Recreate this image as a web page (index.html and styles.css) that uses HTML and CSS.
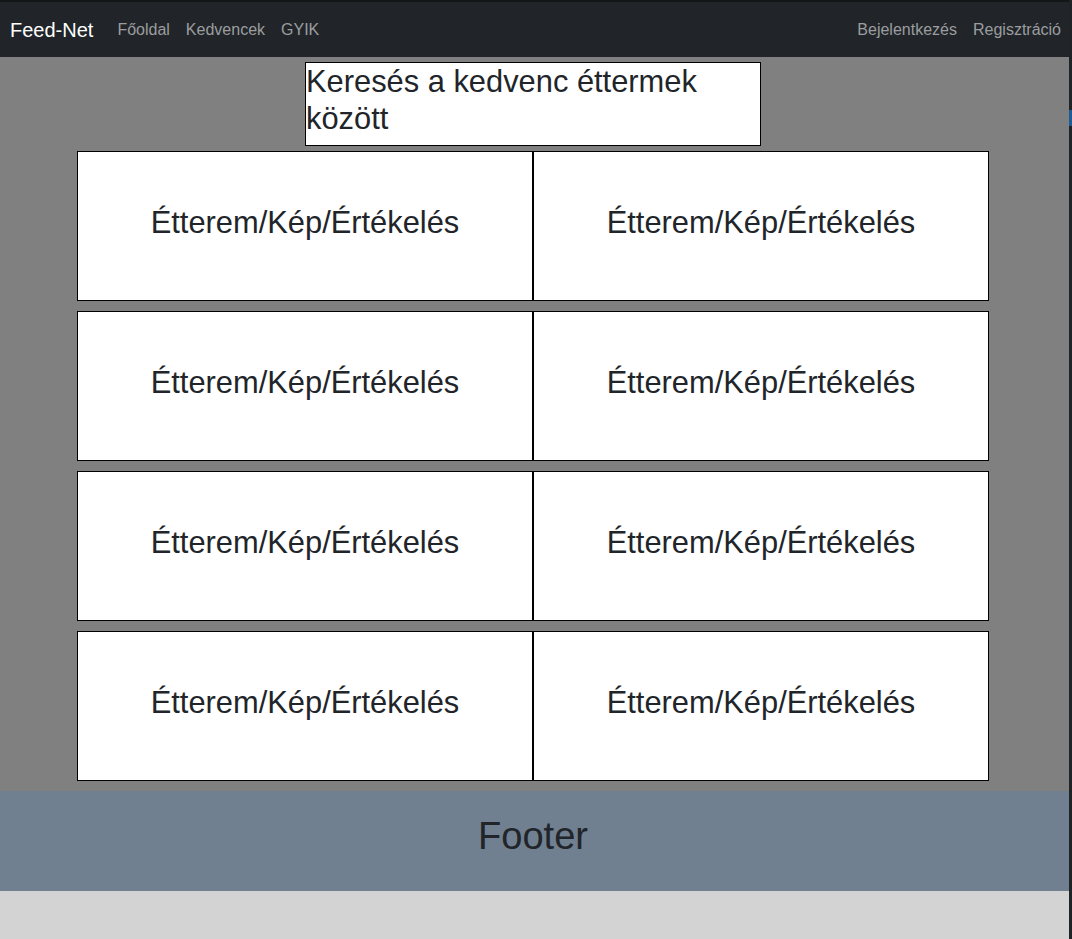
FILE: index.html
```html
<!DOCTYPE html>
<html lang="hu">
<head>
<meta charset="utf-8">
<title>Feed-Net</title>
<link rel="stylesheet" href="styles.css">
</head>
<body>
<div class="page">
  <nav class="navbar">
    <div class="nav-left">
      <a class="brand" href="#">Feed-Net</a>
      <a class="nav-link" href="#">Főoldal</a>
      <a class="nav-link" href="#">Kedvencek</a>
      <a class="nav-link" href="#">GYIK</a>
    </div>
    <div class="nav-right">
      <a class="nav-link" href="#">Bejelentkezés</a>
      <a class="nav-link" href="#">Regisztráció</a>
    </div>
  </nav>
  <main class="main">
    <div class="search">
      <h2 class="h2">Keresés a kedvenc éttermek között</h2>
    </div>
    <div class="grid">
      <div class="cell"><h2 class="h2">Étterem/Kép/Értékelés</h2></div>
      <div class="cell"><h2 class="h2">Étterem/Kép/Értékelés</h2></div>
      <div class="cell"><h2 class="h2">Étterem/Kép/Értékelés</h2></div>
      <div class="cell"><h2 class="h2">Étterem/Kép/Értékelés</h2></div>
      <div class="cell"><h2 class="h2">Étterem/Kép/Értékelés</h2></div>
      <div class="cell"><h2 class="h2">Étterem/Kép/Értékelés</h2></div>
      <div class="cell"><h2 class="h2">Étterem/Kép/Értékelés</h2></div>
      <div class="cell"><h2 class="h2">Étterem/Kép/Értékelés</h2></div>
    </div>
  </main>
  <footer class="footer">
    <h1 class="h1">Footer</h1>
  </footer>
</div>
<div class="edge"></div>
</body>
</html>
```

FILE: styles.css
```css
* { box-sizing: border-box; }

html, body {
  margin: 0;
  padding: 0;
}

body {
  display: flex;
  min-height: 100vh;
  background: #d3d3d3;
  font-family: "Liberation Sans", Arial, sans-serif;
  color: #212529;
}

.page {
  flex: 1;
  display: flex;
  flex-direction: column;
}

.edge {
  width: 3px;
  flex-shrink: 0;
  background: linear-gradient(to bottom, #202326 0 110px, #1d5a96 110px 126px, #202326 126px);
}

.navbar {
  height: 57px;
  background: #212529;
  border-top: 2px solid #131517;
  display: flex;
  align-items: center;
  justify-content: space-between;
  padding: 0 0 0 10px;
}

.nav-left, .nav-right {
  display: flex;
  align-items: center;
}

.brand {
  color: #fff;
  font-size: 20px;
  line-height: 30px;
  text-decoration: none;
  margin-right: 16px;
}

.nav-link {
  color: #9b9d9f;
  font-size: 16px;
  line-height: 24px;
  padding: 0 8px;
  text-decoration: none;
}

.main {
  background: #808080;
  padding: 5px 3px 5px 0;
  display: flex;
  flex-direction: column;
  align-items: center;
}

.h2 {
  font-size: 30.85px;
  line-height: 1.2;
  font-weight: 400;
  margin: 0 0 8px;
}

.h1 {
  font-size: 38.08px;
  line-height: 1.2;
  font-weight: 400;
  margin: 0 0 8px;
}

.search {
  width: 456px;
  background: #fff;
  border: 1px solid #000;
}

.grid {
  width: 912px;
  margin: 5px 0;
  display: grid;
  grid-template-columns: 456px 456px;
  row-gap: 10px;
}

.cell {
  height: 150px;
  background: #fff;
  border: 1px solid #000;
  display: flex;
  align-items: center;
  justify-content: center;
}

.footer {
  height: 100px;
  background: #708090;
  display: flex;
  align-items: center;
  justify-content: center;
  padding-right: 3px;
}
```
